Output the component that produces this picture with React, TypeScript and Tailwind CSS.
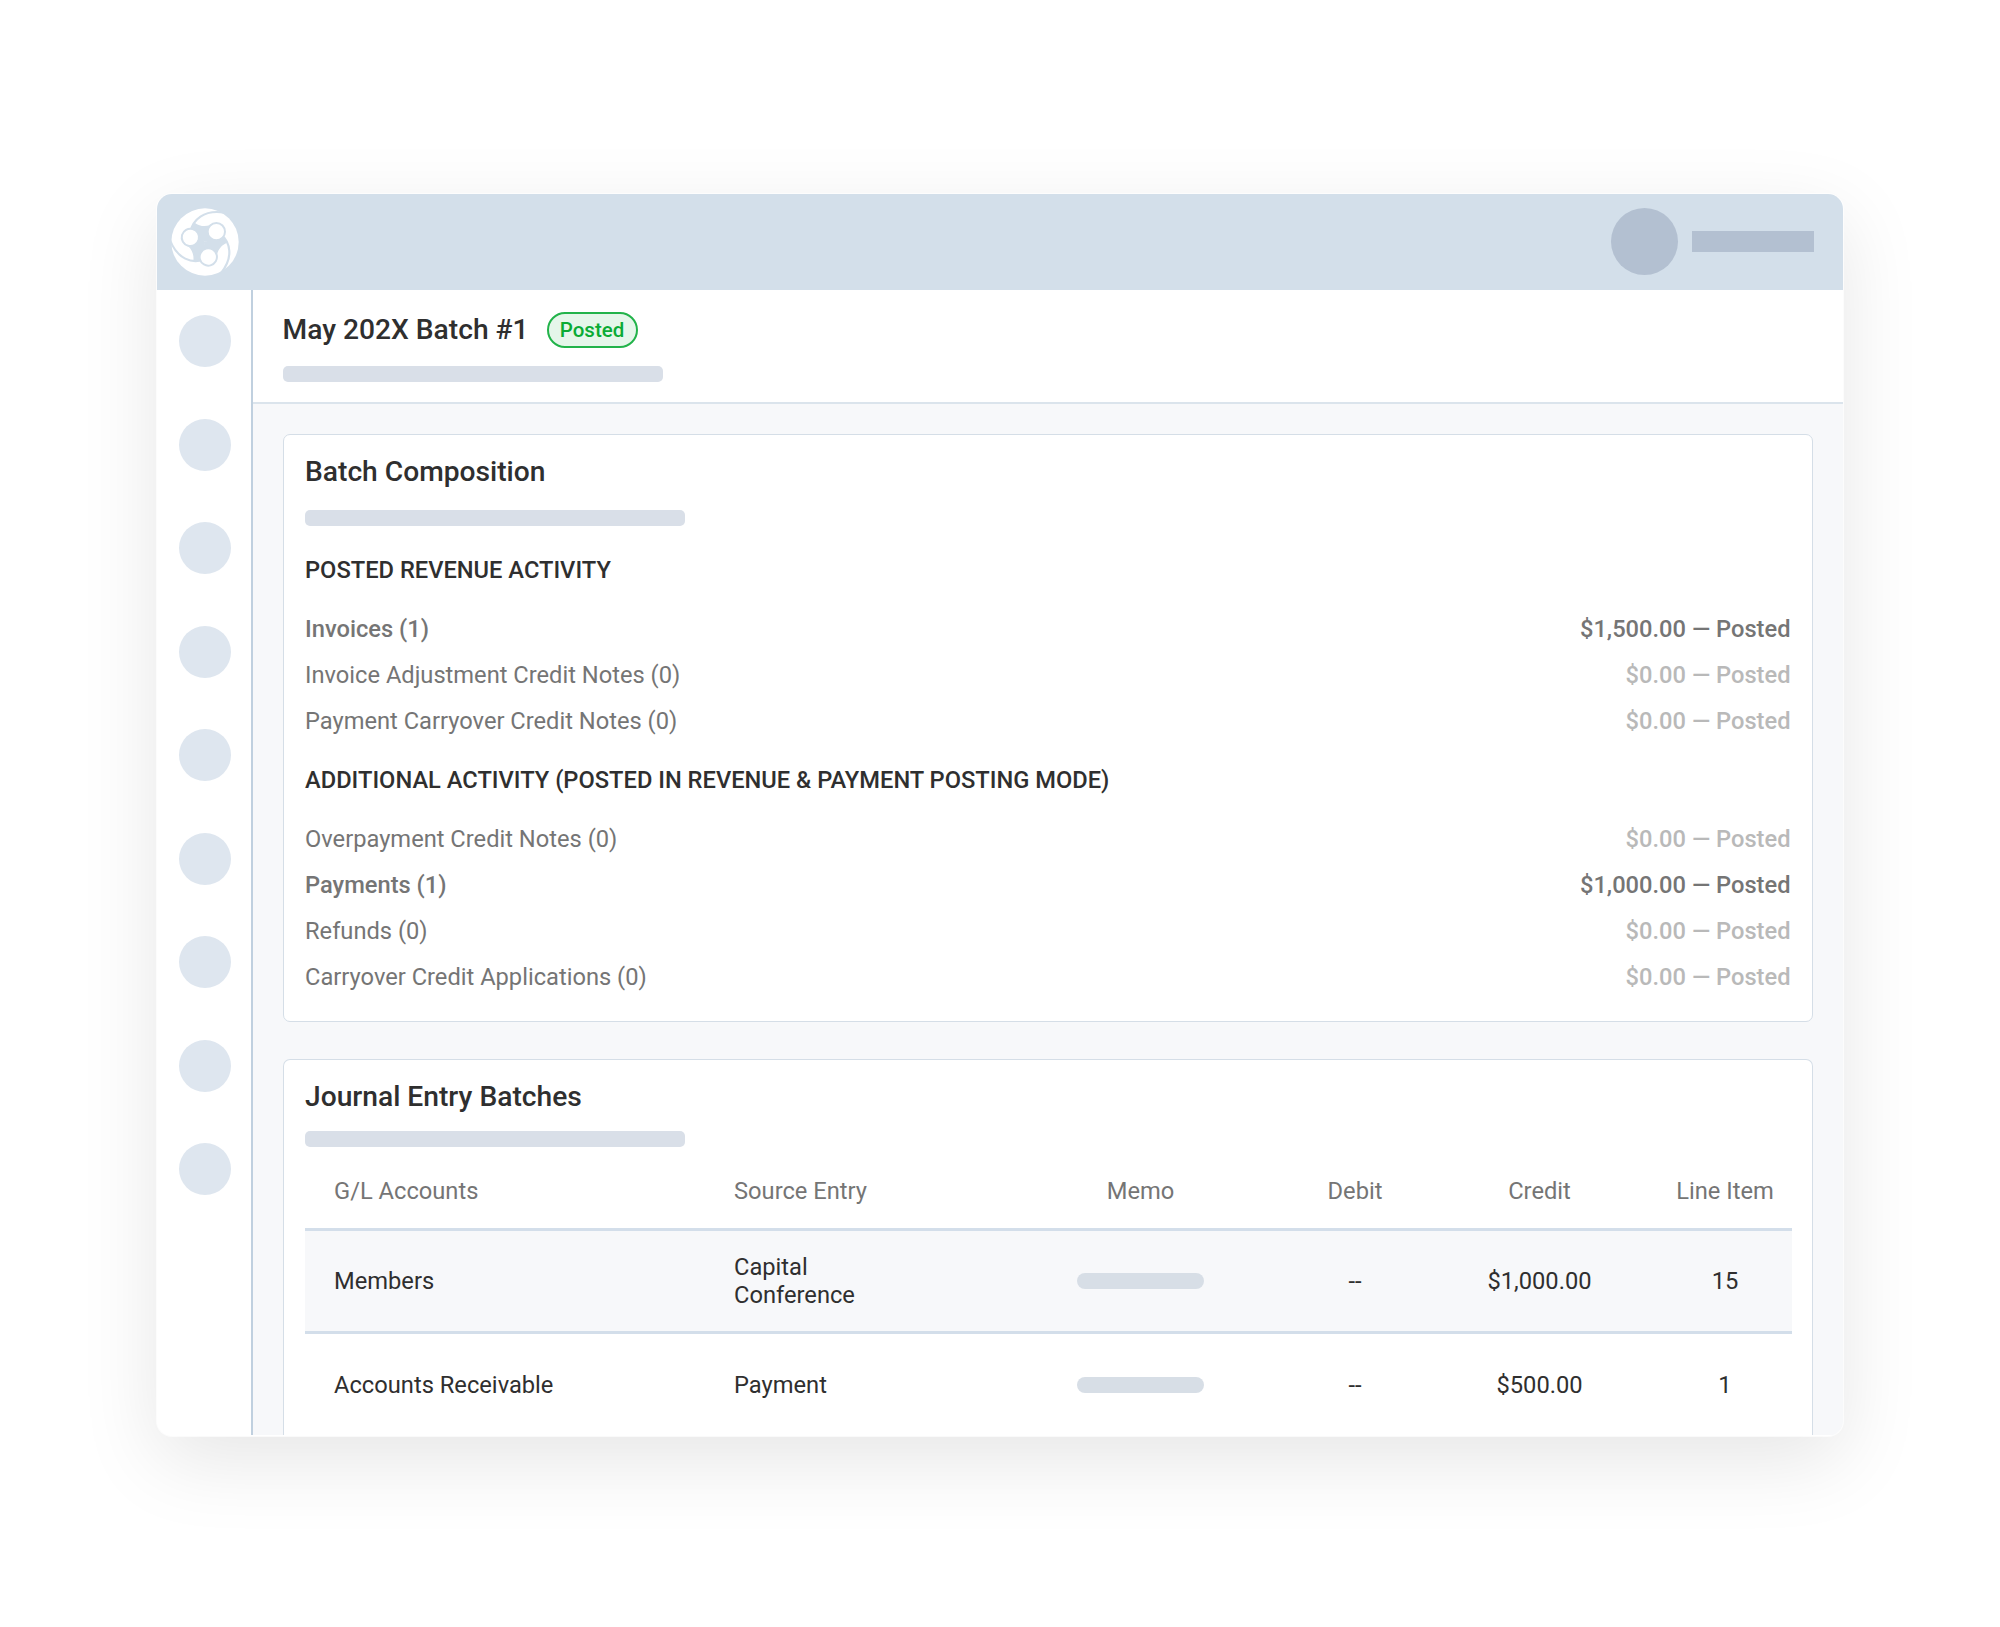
import { clsx } from "clsx";

interface ActivityRow {
  label: string;
  count: number;
  amount: string;
}

interface JournalRow {
  account: string;
  source: string;
  debit: string;
  credit: string;
  lineItem: string;
}

const revenueActivity: ActivityRow[] = [
  { label: "Invoices", count: 1, amount: "$1,500.00" },
  { label: "Invoice Adjustment Credit Notes", count: 0, amount: "$0.00" },
  { label: "Payment Carryover Credit Notes", count: 0, amount: "$0.00" },
];

const additionalActivity: ActivityRow[] = [
  { label: "Overpayment Credit Notes", count: 0, amount: "$0.00" },
  { label: "Payments", count: 1, amount: "$1,000.00" },
  { label: "Refunds", count: 0, amount: "$0.00" },
  { label: "Carryover Credit Applications", count: 0, amount: "$0.00" },
];

const journalRows: JournalRow[] = [
  { account: "Members", source: "Capital Conference", debit: "--", credit: "$1,000.00", lineItem: "15" },
  { account: "Accounts Receivable", source: "Payment", debit: "--", credit: "$500.00", lineItem: "1" },
];

const columns = "grid grid-cols-[429px_299px_215px_214px_155px_174px] items-center text-[23.7px]";

// One arm of the mark, turned three times round the centre
function Logo() {
  const turns = [0, 120, 240];
  return (
    <svg viewBox="-102 -102 204 204" className="h-[68px] w-[68px]">
      <circle r="101" fill="#fff" />
      {turns.map((deg) => (
        <g key={deg} transform={`rotate(${deg})`} fill="#d3dfea">
          <path d="M0 0 L-46 -30 L-38 -50 L-31 -58 C-18 -49 -4 -45 14 -50 L56 -14 Z" />
          <path d="M-44 -30 C-37 -66 -4 -98 58 -88" fill="none" stroke="#d3dfea" strokeWidth="6.5" />
        </g>
      ))}
      {turns.map((deg) => (
        <circle key={deg} cx="34" cy="-31" r="26" transform={`rotate(${deg})`} fill="#fff" stroke="#d3dfea" strokeWidth="6" />
      ))}
    </svg>
  );
}

function Placeholder({ className }: { className?: string }) {
  return <div className={clsx("h-4 w-[380px] rounded-[5px] bg-[#d9dfe8]", className)} />;
}

function ActivityList({ title, rows }: { title: string; rows: ActivityRow[] }) {
  return (
    <section>
      <h3 className="text-[23.68px] leading-[28px] font-medium text-[#2f2f2f]">{title}</h3>
      <ul className="mt-[23px]">
        {rows.map((row) => (
          <li key={row.label} className="flex h-[46px] items-center justify-between text-[23.68px] text-[#757575]">
            <span className={row.count > 0 ? "font-medium" : "font-normal"}>
              {row.label} ({row.count})
            </span>
            <span className={clsx("font-medium", row.count === 0 && "text-[#b9b9b9]")}>
              {row.amount} — Posted
            </span>
          </li>
        ))}
      </ul>
    </section>
  );
}

export default function App() {
  return (
    <div className="flex h-[1627px] w-[2000px] bg-white pt-[194px] pl-[157px] font-[Roboto,sans-serif]">
      <div className="flex h-[1242px] w-[1686px] flex-col overflow-hidden rounded-[15px] bg-white pb-px shadow-[0_24px_80px_rgba(0,0,0,0.1)] ring-1 ring-white/70">
        <header className="flex h-24 shrink-0 items-center justify-between bg-[#d3dfea] pr-[29px] pb-px pl-[14px]">
          <Logo />
          <div className="flex items-center gap-[14px]">
            <div className="size-[67px] rounded-full bg-[#b3c0d1]" />
            <div className="h-[21px] w-[122px] bg-[#b3c0d1]" />
          </div>
        </header>

        <div className="flex min-h-0 flex-1">
          <nav className="flex w-24 shrink-0 flex-col items-center gap-[51.5px] border-r-2 border-[#c0d0df] pt-[25px] pl-[2px]">
            {Array.from({ length: 9 }, (_, i) => (
              <div key={i} className="size-[52px] shrink-0 rounded-full bg-[#dee6ef]" />
            ))}
          </nav>

          <main className="flex min-w-0 flex-1 flex-col bg-[#f7f8fa]">
            <div className="h-[114px] shrink-0 border-b-2 border-[#dbe4ec] bg-white pt-[21px] pl-[29.5px]">
              <div className="flex items-center gap-[21px]">
                <h1 className="w-[243px] text-[28.2px] leading-[38px] font-medium whitespace-nowrap text-[#2f2f2f]">May 202X Batch #1</h1>
                <span className="flex h-9 w-[91px] items-center justify-center rounded-full border-2 border-[#22b34a] bg-[#e5f6ea] text-[20.5px] font-medium text-[#0aab35]">
                  Posted
                </span>
              </div>
              <Placeholder className="mt-[17px]" />
            </div>

            {/* Batch composition */}
            <div className="mr-[30px] ml-[29.5px] mt-[30px] h-[588px] shrink-0 rounded-[7px] border border-[#d5dee7] bg-white pt-[20px] pr-[21.5px] pl-[21.5px]">
              <h2 className="text-[28.2px] leading-[33px] font-medium text-[#2f2f2f]">Batch Composition</h2>
              <Placeholder className="mt-[22px] mb-[30px]" />
              <div className="flex flex-col gap-[21px]">
                <ActivityList title="POSTED REVENUE ACTIVITY" rows={revenueActivity} />
                <ActivityList title="ADDITIONAL ACTIVITY (POSTED IN REVENUE & PAYMENT POSTING MODE)" rows={additionalActivity} />
              </div>
            </div>

            {/* Journal entries run past the bottom edge of the window */}
            <div className="mr-[30px] ml-[29.5px] mt-[37px] min-h-0 flex-1 rounded-t-[7px] border border-b-0 border-[#d5dee7] bg-white pt-[20px] pr-[20.5px] pl-[21.5px]">
              <h2 className="text-[28.2px] leading-[33px] font-medium text-[#2f2f2f]">Journal Entry Batches</h2>
              <Placeholder className="mt-[18px]" />
              <div className={clsx(columns, "h-[84px] border-b-[3px] border-[#d3deea] pt-[9px] text-[#757575]")}>
                <span className="pl-[29px]">G/L Accounts</span>
                <span>Source Entry</span>
                <span className="text-center">Memo</span>
                <span className="text-center">Debit</span>
                <span className="text-center">Credit</span>
                <span className="pl-[42px] text-center">Line Item</span>
              </div>
              {journalRows.map((row, i) => (
                <div
                  key={row.account}
                  className={clsx(
                    columns,
                    "leading-7 text-[#2f2f2f]",
                    i === 0 ? "h-[103px] border-b-[3px] border-[#d3deea] bg-[#f7f8fa]" : "h-[101px]"
                  )}
                >
                  <span className="pl-[29px]">{row.account}</span>
                  <span className="w-[140px]">{row.source}</span>
                  <span className="mx-auto h-4 w-[127px] rounded-full bg-[#d7dee6]" />
                  <span className="text-center">{row.debit}</span>
                  <span className="text-center">{row.credit}</span>
                  <span className="pl-[42px] text-center">{row.lineItem}</span>
                </div>
              ))}
            </div>
          </main>
        </div>
      </div>
    </div>
  );
}
